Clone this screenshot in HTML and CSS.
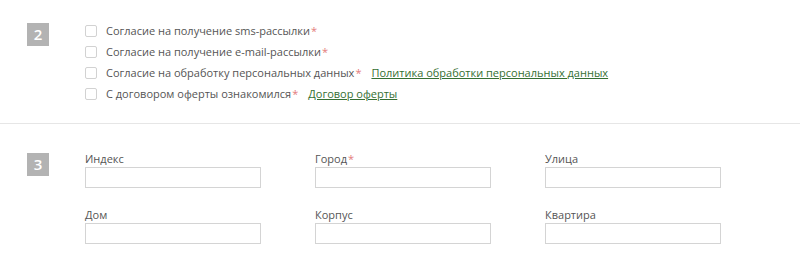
FILE: index.html
```html
<!DOCTYPE html>
<html lang="ru">
<head>
    <meta charset="UTF-8">
    <title>Оформление заказа</title>
    <link rel="stylesheet" href="styles.css">
</head>
<body>
    <div class="step step-agree">
        <div class="step-num">2</div>
        <ul class="agree-list">
            <li><span class="check"></span>Согласие на получение sms-рассылки<span class="req">*</span></li>
            <li><span class="check"></span>Согласие на получение e-mail-рассылки<span class="req">*</span></li>
            <li><span class="check"></span>Согласие на обработку персональных данных<span class="req">*</span><a href="#" class="doc-link">Политика обработки персональных данных</a></li>
            <li><span class="check"></span>С договором оферты ознакомился<span class="req">*</span><a href="#" class="doc-link">Договор оферты</a></li>
        </ul>
    </div>

    <div class="step step-address">
        <div class="step-num">3</div>
        <div class="fields">
            <label class="field"><span class="field-label">Индекс</span><input type="text"></label>
            <label class="field"><span class="field-label">Город<span class="req">*</span></span><input type="text"></label>
            <label class="field"><span class="field-label">Улица</span><input type="text"></label>
            <label class="field"><span class="field-label">Дом</span><input type="text"></label>
            <label class="field"><span class="field-label">Корпус</span><input type="text"></label>
            <label class="field"><span class="field-label">Квартира</span><input type="text"></label>
        </div>
    </div>
</body>
</html>
```
FILE: styles.css
```css
body {
    margin: 0;
    background: #fff;
    font-family: "Open Sans", Arial, sans-serif;
    font-size: 11px;
    color: #555;
}

.step {
    display: flex;
    padding-left: 27px;
}

.step-num {
    width: 22px;
    height: 23px;
    margin-right: 36px;
    background: #b3b3b3;
    color: #fff;
    font-size: 15px;
    font-weight: 600;
    line-height: 23px;
    text-align: center;
}

.step-agree {
    padding-top: 20px;
    padding-bottom: 19px;
    border-bottom: 1px solid #e6e6e6;
}

.step-agree .step-num {
    margin-top: 3px;
}

.agree-list {
    list-style: none;
    margin: 0;
    padding: 0;
}

.agree-list li {
    display: flex;
    align-items: center;
    height: 21px;
    white-space: nowrap;
}

.check {
    width: 10px;
    height: 10px;
    margin-right: 9px;
    border: 1px solid #d2d2d2;
    border-radius: 2px;
    background: #fff;
}

.req {
    color: #e47b7b;
    margin-left: 1px;
}

.doc-link {
    margin-left: 10px;
    color: #356f33;
    text-decoration: underline;
}

.step-address {
    padding-top: 27px;
}

.step-address .step-num {
    margin-top: 2px;
}

.fields {
    display: grid;
    grid-template-columns: repeat(3, 176px);
    column-gap: 54px;
    row-gap: 19px;
}

.field {
    display: flex;
    flex-direction: column;
}

.field-label {
    height: 16px;
    line-height: 15px;
}

.field input {
    box-sizing: border-box;
    width: 176px;
    height: 21px;
    margin: 0;
    border: 1px solid #d4d4d4;
    background: #fff;
    outline: none;
}
```
